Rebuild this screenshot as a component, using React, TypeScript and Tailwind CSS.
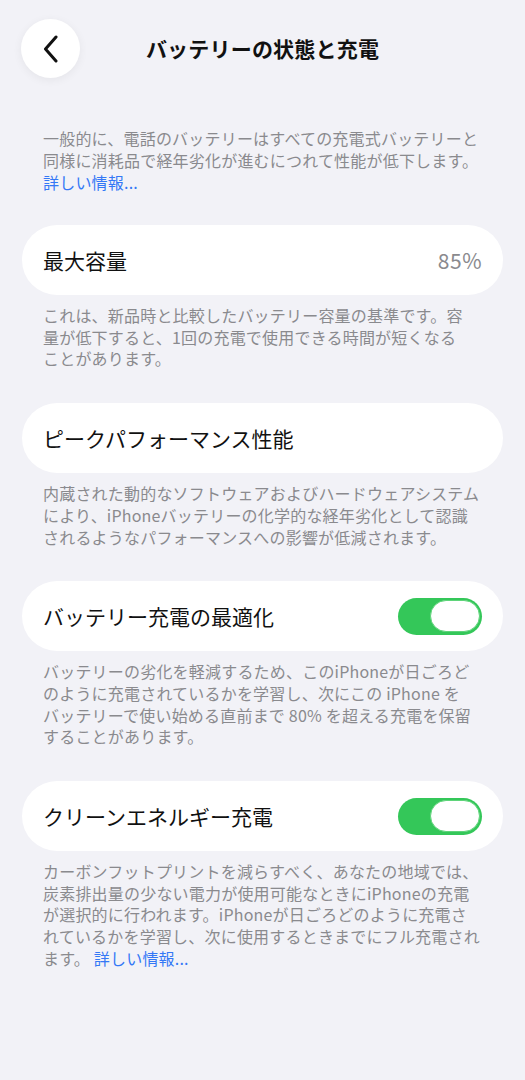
import React from "react";

const font = { fontFamily: '"Noto Sans CJK JP", "Noto Sans", sans-serif' };

function Toggle() {
  return (
    <div className="w-[84px] h-[37px] rounded-full bg-[#34c759] flex items-center justify-end pr-[2px]">
      <div className="w-[50px] h-[32px] rounded-full bg-white border border-[#5fd47a]" />
    </div>
  );
}

function Card({ label, right }: { label: string; right?: React.ReactNode }) {
  return (
    <div className="mx-[22px] h-[70px] rounded-full bg-white flex items-center justify-between pl-[21px] pr-[21px]">
      <span className="text-[21px] text-[#111] leading-none">{label}</span>
      {right}
    </div>
  );
}

function Desc({ lines, last }: { lines: React.ReactNode[]; last?: boolean }) {
  return (
    <div
      className={`px-[43px] pt-[10px] ${last ? "" : "pb-[33px]"} text-[16px] leading-[21.7px] tracking-[0.2px] text-[#8a8a8e]`}
    >
      {lines.map((l, i) => (
        <div key={i} className="whitespace-nowrap">
          {l}
        </div>
      ))}
    </div>
  );
}

export default function App() {
  return (
    <div className="min-h-[1080px] w-[525px] bg-[#f2f2f7]" style={font}>
      <div className="pt-[19px] relative h-[78px]">
        <div className="absolute left-[21px] top-[19px] w-[59px] h-[59px] rounded-full bg-white shadow-[0_2px_10px_rgba(0,0,0,0.06)] flex items-center justify-center">
          <svg width="16" height="28" viewBox="0 0 16 28" fill="none">
            <path d="M13 2 L2.5 14 L13 26" stroke="#111" strokeWidth="3" strokeLinecap="round" strokeLinejoin="round" />
          </svg>
        </div>
        <div className="h-[59px] flex items-center justify-center text-[21px] font-bold text-[#111] tracking-[0.2px]">
          バッテリーの状態と充電
        </div>
      </div>

      <div className="mt-[49px] px-[43px] pb-[32px] text-[16px] leading-[22px] tracking-[0.2px] text-[#8a8a8e]">
        <div className="whitespace-nowrap">一般的に、電話のバッテリーはすべての充電式バッテリーと</div>
        <div className="whitespace-nowrap">同様に消耗品で経年劣化が進むにつれて性能が低下します。</div>
        <div className="text-[#3478f6]">詳しい情報...</div>
      </div>

      <Card label="最大容量" right={<span className="text-[21px] text-[#8a8a8e] leading-none tracking-[0.5px]">85%</span>} />
      <Desc
        lines={[
          "これは、新品時と比較したバッテリー容量の基準です。容",
          "量が低下すると、1回の充電で使用できる時間が短くなる",
          "ことがあります。",
        ]}
      />

      <Card label="ピークパフォーマンス性能" />
      <Desc
        lines={[
          "内蔵された動的なソフトウェアおよびハードウェアシステム",
          "により、iPhoneバッテリーの化学的な経年劣化として認識",
          "されるようなパフォーマンスへの影響が低減されます。",
        ]}
      />

      <Card label="バッテリー充電の最適化" right={<Toggle />} />
      <Desc
        lines={[
          "バッテリーの劣化を軽減するため、このiPhoneが日ごろど",
          "のように充電されているかを学習し、次にこの iPhone を",
          "バッテリーで使い始める直前まで 80% を超える充電を保留",
          "することがあります。",
        ]}
      />

      <Card label="クリーンエネルギー充電" right={<Toggle />} />
      <Desc
        last
        lines={[
          "カーボンフットプリントを減らすべく、あなたの地域では、",
          "炭素排出量の少ない電力が使用可能なときにiPhoneの充電",
          "が選択的に行われます。iPhoneが日ごろどのように充電さ",
          "れているかを学習し、次に使用するときまでにフル充電され",
          <>
            ます。 <span className="text-[#3478f6]">詳しい情報...</span>
          </>,
        ]}
      />
    </div>
  );
}
